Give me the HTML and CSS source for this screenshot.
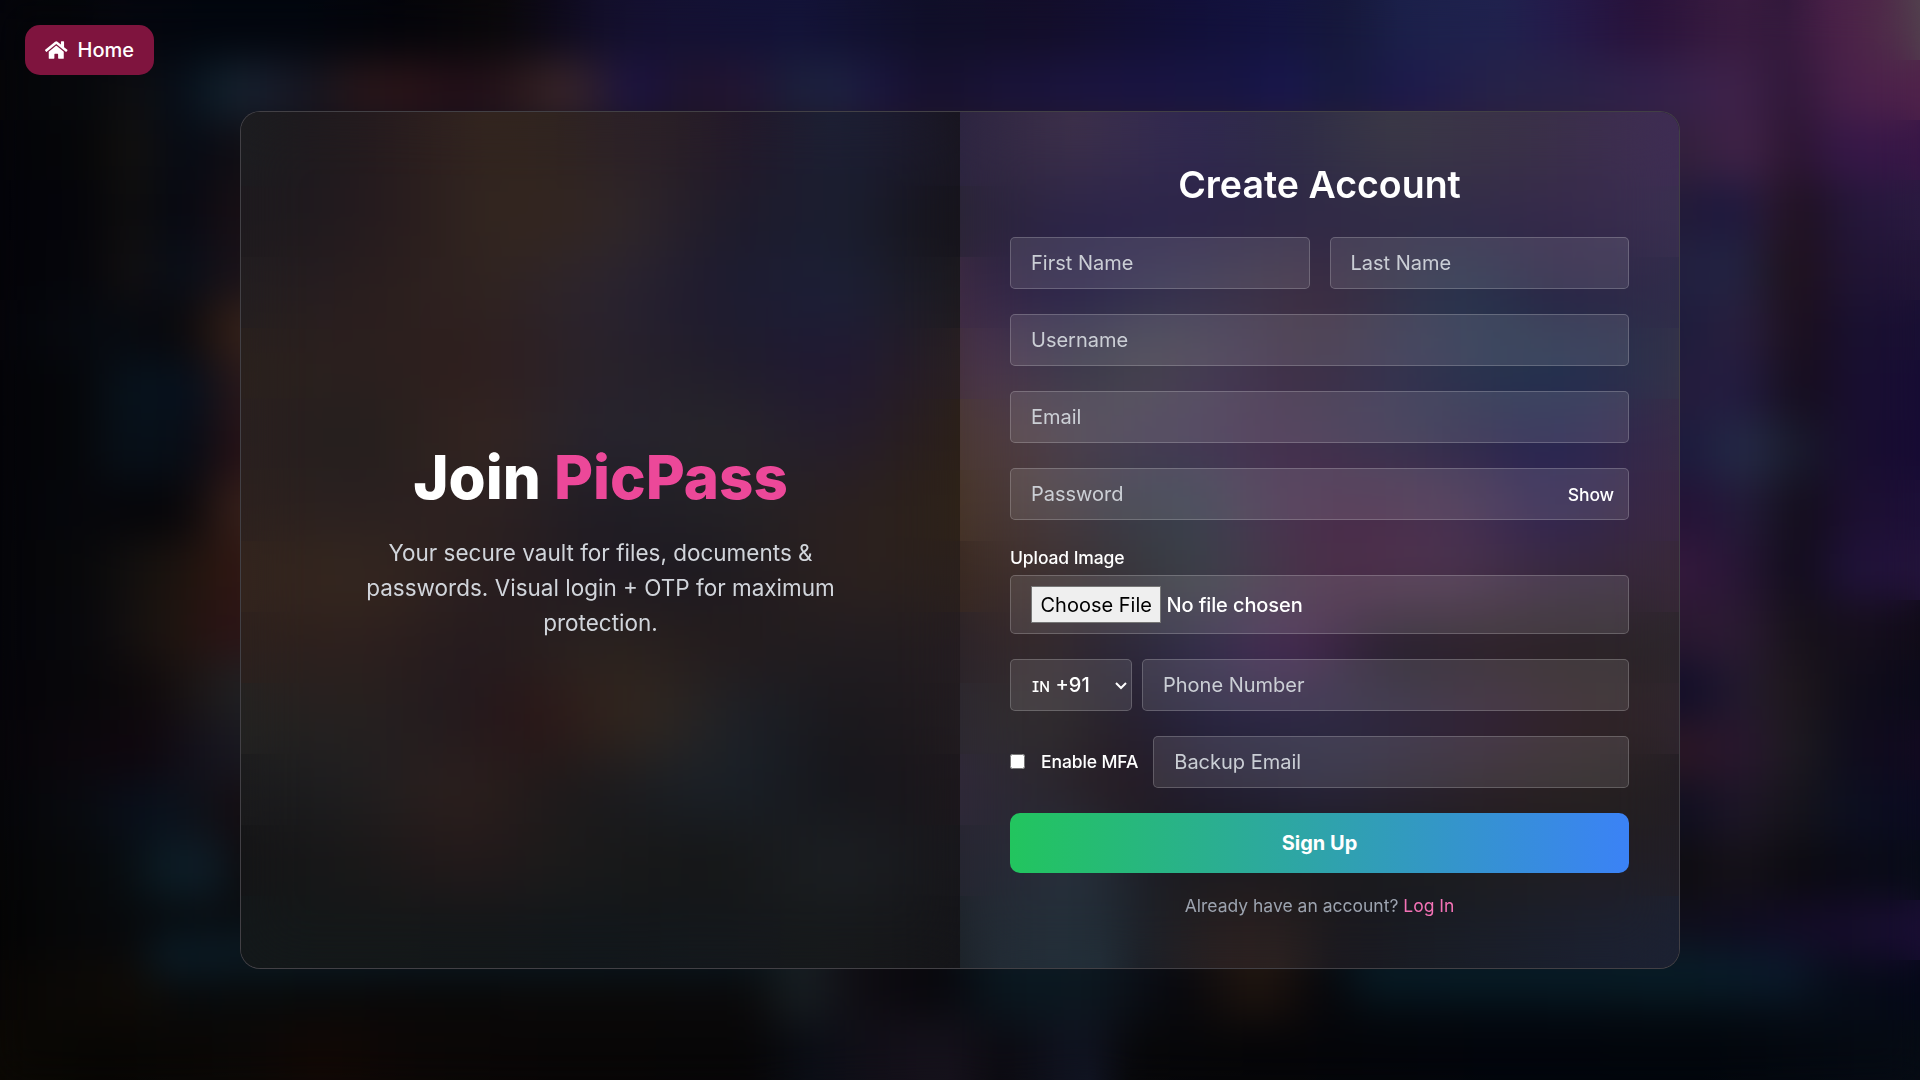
FILE: index.html
```html
<!DOCTYPE html>
<html lang="en">
<head>
  <meta charset="utf-8">
  <title>PicPass - Create Account</title>
  <link rel="stylesheet" href="styles.css">
</head>
<body>
  <div class="backdrop"></div>
  <a class="home" href="#">
    <svg class="home-icon" viewBox="0 0 576 512" fill="currentColor"><path d="M280.37 148.26L96 300.11V464a16 16 0 0 0 16 16l112.06-.29a16 16 0 0 0 15.92-16V368a16 16 0 0 1 16-16h64a16 16 0 0 1 16 16v95.64a16 16 0 0 0 16 16.05L464 480a16 16 0 0 0 16-16V300L295.67 148.26a12.19 12.19 0 0 0-15.3 0zM571.6 251.47L488 182.56V44.05a12 12 0 0 0-12-12h-56a12 12 0 0 0-12 12v72.61L318.47 43a48 48 0 0 0-61 0L4.34 251.47a12 12 0 0 0-1.6 16.9l25.5 31A12 12 0 0 0 45.15 301l235.22-193.74a12.19 12.19 0 0 1 15.3 0L530.9 301a12 12 0 0 0 16.9-1.6l25.5-31a12 12 0 0 0-1.7-16.93z"/></svg>
    <span>Home</span>
  </a>
  <main class="card">
    <section class="panel intro">
      <h1 class="title">Join <span class="brand">PicPass</span></h1>
      <p class="lead">Your secure vault for files, documents &amp; passwords. Visual login + OTP for maximum protection.</p>
    </section>
    <section class="panel signup">
      <h2 class="heading">Create Account</h2>
      <form class="form">
        <div class="row names">
          <input class="field" type="text" placeholder="First Name">
          <input class="field" type="text" placeholder="Last Name">
        </div>
        <input class="field" type="text" placeholder="Username">
        <input class="field" type="email" placeholder="Email">
        <div class="password">
          <input class="field" type="password" placeholder="Password">
          <button class="show" type="button">Show</button>
        </div>
        <div class="upload">
          <label class="label" for="image">Upload Image</label>
          <input class="field file" id="image" type="file">
        </div>
        <div class="row phone">
          <select class="field code"><option>ɪɴ +91</option></select>
          <input class="field" type="tel" placeholder="Phone Number">
        </div>
        <div class="row mfa">
          <input class="check" id="mfa" type="checkbox">
          <label class="label" for="mfa">Enable MFA</label>
          <input class="field" type="email" placeholder="Backup Email">
        </div>
        <button class="submit" type="button">Sign Up</button>
      </form>
      <p class="login">Already have an account? <a class="link" href="#">Log In</a></p>
    </section>
  </main>
</body>
</html>
```
FILE: styles.css
```css
* {
  box-sizing: border-box;
  margin: 0;
}

body {
  position: relative;
  height: 1080px;
  display: flex;
  align-items: center;
  justify-content: center;
  overflow: hidden;
  background: #050508;
  color: #fff;
  font-family: Inter, "Liberation Sans", sans-serif;
  font-size: 20px;
}

/* Blurred artwork: horizontal colour strips softened by a backdrop blur */
.backdrop {
  position: absolute;
  inset: 0;
  background:
    linear-gradient(90deg, #04040a 0px, #040508 60px, #05060e 125px, #02060e 200px, #02060e 300px, #04040a 400px, #0a080a 500px, #0e0a1c 560px, #130f2a 600px, #141030 640px, #131338 800px, #100f28 930px, #130e2a 1040px, #12103a 1200px, #141440 1280px, #16183a 1345px, #1b204a 1400px, #20224e 1500px, #241a4a 1560px, #28123a 1640px, #3a1c40 1740px, #30183a 1785px, #4a2048 1830px, #4e2748 1880px, #52424e 1920px) 0 0,
    linear-gradient(90deg, #050508 0px, #06080c 100px, #100f10 130px, #050c18 180px, #10202a 220px, #182030 250px, #151520 310px, #25161a 350px, #2a1418 400px, #200e18 470px, #2a181c 520px, #3a2628 560px, #2a1c30 600px, #1a1244 630px, #1e142e 680px, #221432 740px, #1a1f3c 800px, #1d2340 830px, #1a153e 880px, #16102c 930px, #191338 1000px, #1a1440 1100px, #171544 1250px, #181650 1280px, #171a3c 1340px, #1c194c 1400px, #262248 1500px, #282246 1560px, #30204a 1640px, #40224a 1740px, #2c1636 1790px, #48204a 1840px, #50224a 1920px) 0 60px,
    linear-gradient(90deg, #040409 0px, #050608 90px, #14110f 130px, #050a14 180px, #100e14 235px, #33203c 1690px, #42234a 1750px, #28142c 1790px, #361848 1840px, #381646 1920px) 0 120px,
    linear-gradient(90deg, #030309 0px, #05050a 90px, #100f0e 130px, #050812 180px, #180f14 235px, #221a38 1690px, #1c1840 1735px, #2c1a34 1770px, #1e101c 1795px, #24163a 1850px, #2a1a40 1920px) 0 180px,
    linear-gradient(90deg, #040308 0px, #05060b 90px, #141010 130px, #060d18 180px, #1a1218 235px, #222040 1690px, #232443 1740px, #1e1018 1790px, #201434 1850px, #221538 1920px) 0 240px,
    linear-gradient(90deg, #050409 0px, #060a10 90px, #080a10 130px, #07080d 180px, #281812 220px, #36231c 240px, #1e1c3c 1690px, #2a2040 1740px, #1a0e1a 1800px, #191030 1850px, #190f33 1920px) 0 300px,
    linear-gradient(90deg, #040408 0px, #050609 85px, #081018 110px, #06131e 150px, #070e1a 200px, #2a181a 235px, #241c3c 1690px, #231c42 1740px, #150d1a 1800px, #190f30 1850px, #170c34 1920px) 0 360px,
    linear-gradient(90deg, #040408 0px, #050609 85px, #081018 110px, #070f18 160px, #080b14 200px, #281216 235px, #1c1a3c 1690px, #252c48 1745px, #171828 1800px, #180e2e 1850px, #170b34 1920px) 0 420px,
    linear-gradient(90deg, #040408 0px, #06070c 90px, #050509 150px, #0a080b 190px, #38201a 235px, #241236 1690px, #231c3a 1745px, #120d18 1800px, #1c0f30 1850px, #1d0f38 1920px) 0 480px,
    linear-gradient(90deg, #040408 0px, #08080a 90px, #12100f 130px, #1c130e 180px, #301712 235px, #33183c 1690px, #271636 1740px, #100c18 1800px, #20123a 1850px, #23133a 1920px) 0 540px,
    linear-gradient(90deg, #040409 0px, #08080c 90px, #141010 130px, #20150f 180px, #2c1416 235px, #2a1830 1690px, #2c1b34 1740px, #151118 1800px, #170f1e 1850px, #100b18 1920px) 0 600px,
    linear-gradient(90deg, #050409 0px, #08070a 90px, #0f0a0c 150px, #1a1414 190px, #202022 235px, #120e28 1690px, #241a30 1740px, #1f181c 1790px, #100d1a 1850px, #0c0a1a 1920px) 0 660px,
    linear-gradient(90deg, #060509 0px, #0c070d 90px, #0f070e 150px, #12101a 190px, #191820 235px, #2a1624 1690px, #28162f 1740px, #1c1a1e 1800px, #0e0c1c 1850px, #120a20 1920px) 0 720px,
    linear-gradient(90deg, #050508 0px, #090b10 90px, #080e1a 130px, #0b131c 180px, #140d12 235px, #100f20 1690px, #1e1628 1740px, #16141a 1790px, #0c0f20 1850px, #0b0a20 1920px) 0 780px,
    linear-gradient(90deg, #050506 0px, #07090b 90px, #080e12 135px, #0b1c25 158px, #0e1d28 212px, #0c0b0d 240px, #0e0c10 1690px, #16121a 1740px, #0c0b10 1790px, #0a0a16 1850px, #080c18 1920px) 0 840px,
    linear-gradient(90deg, #040404 0px, #07080a 90px, #07090c 150px, #080c10 240px, #0a1014 700px, #18242a 800px, #100e14 850px, #08070c 940px, #0c1c26 1000px, #0e1c26 1080px, #0c1018 1160px, #2a1c14 1260px, #07101a 1340px, #0a141e 1500px, #0f0e1c 1690px, #0f0c20 1740px, #140c28 1830px, #1a0e34 1920px) 0 900px,
    linear-gradient(90deg, #080605 0px, #0c0906 90px, #0f0b07 140px, #070a0c 190px, #080a0b 260px, #090808 400px, #0a0909 600px, #0a090a 750px, #182024 800px, #100e14 850px, #08070c 940px, #0a161e 1000px, #0c1820 1080px, #0c1018 1130px, #07070c 1180px, #20150f 1260px, #07060a 1320px, #050c12 1380px, #050d14 1500px, #060f16 1690px, #070f1a 1800px, #060c18 1850px, #050818 1920px) 0 960px,
    linear-gradient(90deg, #0b0804 0px, #070604 100px, #0b0806 250px, #110805 320px, #0b0706 420px, #080606 560px, #070607 750px, #0b0e16 810px, #120f18 880px, #16121c 950px, #0b0a10 1000px, #111524 1090px, #070709 1130px, #050508 1280px, #02050c 1500px, #02060c 1700px, #060b14 1920px) 0 1020px;
  background-size: 100% 60px;
  background-repeat: no-repeat;
}

/* Neon bars along the floor of the artwork */
.backdrop::before {
  content: "";
  position: absolute;
  top: 936px;
  left: 0;
  width: 100%;
  height: 60px;
  background:
    linear-gradient(90deg, transparent 140px, #0a1e2a 160px, #0b1b25 240px, #0a161e 760px, transparent 790px) 0 0 / 100% 38px no-repeat,
    linear-gradient(90deg, transparent 1335px, #071c26 1370px, #071e29 1690px, #0a1a2c 1790px, transparent 1825px) 0 16px / 100% 42px no-repeat;
}

.backdrop::after {
  content: "";
  position: absolute;
  inset: 0;
  backdrop-filter: blur(20px);
}

.home {
  position: absolute;
  top: 25px;
  left: 25px;
  height: 50px;
  padding: 0 20px;
  display: flex;
  align-items: center;
  gap: 10px;
  border-radius: 15px;
  background: #7f143e;
  color: #fff;
  font-weight: 500;
  text-decoration: none;
}

.home-icon {
  width: 22.5px;
  height: 20px;
}

.card {
  position: relative;
  width: 1440px;
  height: 858px;
  display: grid;
  grid-template-columns: 1fr 1fr;
  overflow: hidden;
  border: 1px solid rgba(255, 255, 255, 0.17);
  border-radius: 20px;
  background: #1c1a20;
}

.panel {
  position: relative;
  padding: 50px;
  background-size: 100% 74px;
  background-repeat: no-repeat;
}

.panel::before {
  content: "";
  position: absolute;
  inset: 0;
  backdrop-filter: blur(32px);
}

.panel > * {
  position: relative;
}

.intro {
  display: flex;
  flex-direction: column;
  align-items: center;
  justify-content: center;
  gap: 20px;
  text-align: center;
  background-image:
    linear-gradient(90deg, #1c1d20 0px, #1d1a1e 60px, #271b1e 150px, #33251f 240px, #30241f 310px, #2c2128 380px, #2a2026 430px, #22182a 500px, #1c2034 590px, #1c1a2e 660px, #18151e 720px),
    linear-gradient(90deg, #1e1a1e 0px, #1e191e 60px, #271b1e 150px, #34271f 260px, #32261f 330px, #30272a 390px, #1e1a2a 480px, #1a1e30 600px, #16141c 680px, #15131a 720px),
    linear-gradient(90deg, #221e20, #291d1e, #30231f, #2b2430, #1d1a30, #1c2038, #1c191c),
    linear-gradient(90deg, #2a211d, #2b1f1e, #2e1e1e, #29222a, #201c2a, #201834, #2a2020),
    linear-gradient(90deg, #2a201f, #231e1e, #35251f, #262330, #28262a, #241c2e, #2c2016),
    linear-gradient(90deg, #2c211e, #291f1f, #2e2221, #1f1c24, #232126, #2a2020, #2e2217),
    linear-gradient(90deg, #33241d, #36281f, #2a1e1f, #201a22, #1d1a20, #2c211f, #2a201c),
    linear-gradient(90deg, #2c201d, #2d1f1d, #241a1e, #2c241f, #241b1c, #201c20, #241c20),
    linear-gradient(90deg, #232322, #26211f, #221a1e 30%, #2a1416 40%, #35291f, #1b2028, #1a171b, #221c20),
    linear-gradient(90deg, #1a1a1c, #1e1e20, #2e201d 220px, #1b181a 330px, #1a2129 480px, #15151a, #1d171c),
    linear-gradient(90deg, #141416, #181717, #24191a 220px, #1a1a1a, #151515, #1c2024, #17161a),
    linear-gradient(90deg, #13181a, #141819, #131719, #12171b, #14181c, #17191b, #141418);
  background-position: 0 0, 0 71px, 0 142px, 0 213px, 0 284px, 0 355px, 0 426px, 0 497px, 0 568px, 0 639px, 0 710px, 0 782px;
}

.title {
  font-size: 60px;
  font-weight: 800;
  line-height: 75px;
}

.brand {
  color: #ec4899;
}

.lead {
  max-width: 480px;
  color: #d1d5db;
  font-size: 22.5px;
  line-height: 35px;
}

.signup {
  background-image:
    linear-gradient(90deg, #2c2440, #3d304a, #302850, #2f2c46 340px, #3a3846 430px, #3a3048, #3f2c54),
    linear-gradient(90deg, #2a2434, #2a2348, #2c2448, #2f2845, #302b48, #35284a, #3a3050),
    linear-gradient(90deg, #3f2b42 0px, #2c234a 80px, #333050 190px, #3c3448 290px, #3e2c40 360px, #28364e 500px, #2a2444 600px, #302c4a 720px),
    linear-gradient(90deg, #43303c 0px, #4b3550 40px, #383a4a 120px, #48464c 190px, #443a55 260px, #3e3044 340px, #353350 440px, #24364e 560px, #24304e 640px, #363448 720px),
    linear-gradient(90deg, #4a3830 0px, #503c44 60px, #4a4250 120px, #453856 220px, #432f4c 340px, #383650 420px, #2c284a 520px, #262652 600px, #35284a 680px, #392c46 720px),
    linear-gradient(90deg, #473426 0px, #4a3a3c 70px, #3a3a48 160px, #36424e 230px, #4a3654 300px, #482a48 390px, #4a3250 480px, #2e2454 600px, #3a2844 680px, #3a2844 720px),
    linear-gradient(90deg, #38281f 0px, #40302e 70px, #383438 160px, #3c4248 240px, #4c2e48 370px, #4e3450 480px, #38283e 600px, #382838 720px),
    linear-gradient(90deg, #2a2228 0px, #36292c 80px, #2a2434 140px, #332f4c 240px, #4a2c56 320px, #3e2446 370px, #25202c 420px, #2c2226 540px, #282224 640px, #2c262c 720px),
    linear-gradient(90deg, #2c2830 0px, #33302f 90px, #251e2a 160px, #272440 240px, #2e2b44 380px, #35243a 520px, #322426 640px, #302630 720px),
    linear-gradient(90deg, #30293a 0px, #2a2730 80px, #261a20 160px, #211d30 240px, #28243a 360px, #2a2024 540px, #25201f 640px, #221d24 720px),
    linear-gradient(90deg, #262530 0px, #272a36 60px, #283340 130px, #1a1b22 180px, #1a181c 290px, #1a1a1c 440px, #201d20 590px, #221e26 720px),
    linear-gradient(90deg, #1c2228 0px, #232c36 40px, #23303a 140px, #1a1e26 180px, #2a2020 260px, #2c2220 320px, #1a181e 370px, #191d26 480px, #1b2030 640px, #1c2132 720px);
  background-position: 0 0, 0 71px, 0 142px, 0 213px, 0 284px, 0 355px, 0 426px, 0 497px, 0 568px, 0 639px, 0 710px, 0 782px;
}

.heading {
  margin-bottom: 30px;
  font-size: 37.5px;
  font-weight: 600;
  line-height: 45px;
  text-align: center;
}

.form {
  display: flex;
  flex-direction: column;
  gap: 25px;
}

.row {
  display: flex;
  align-items: center;
}

.names {
  gap: 20px;
}

.phone {
  gap: 10px;
}

.field {
  display: block;
  flex: 1;
  min-width: 0;
  width: 100%;
  height: 52px;
  min-height: 52px;
  padding: 0 20px;
  border: 1px solid rgba(255, 255, 255, 0.2);
  border-radius: 5px;
  background: rgba(255, 255, 255, 0.1);
  color: #fff;
  font: 500 20px Inter, "Liberation Sans", sans-serif;
}

.field::placeholder {
  color: #d1d5db;
  opacity: 0.96;
  font-weight: 400;
}

.password {
  position: relative;
}

.show {
  position: absolute;
  right: 15px;
  top: 14px;
  padding: 0;
  border: 0;
  background: none;
  color: #fff;
  font: 500 17.5px/25px Inter, "Liberation Sans", sans-serif;
  letter-spacing: -0.1px;
}

.label {
  font-size: 17.5px;
  font-weight: 500;
  line-height: 25px;
  letter-spacing: -0.1px;
}

.upload {
  display: flex;
  flex-direction: column;
  gap: 5px;
}

.file {
  flex: none;
  height: 59px;
  padding-top: 10px;
  letter-spacing: -0.1px;
}

.file::file-selector-button {
  height: 37px;
  margin: 0 5px 0 0;
  padding: 1px 8.5px;
  border: 1px solid #767676;
  border-radius: 0;
  background: #efefef;
  color: #000;
  font: 400 20px Inter, "Liberation Sans", sans-serif;
  letter-spacing: 0;
}

/* Zoomed so the native arrow grows with the text */
.code {
  zoom: 1.25;
  flex: none;
  width: 97.6px;
  height: 41.6px;
  min-height: 0;
  padding: 0 12.8px;
  border-radius: 4px;
  font-size: 16px;
}

.code option {
  background: #222;
}

.check {
  width: 15px;
  height: 15px;
  margin: 0 16px 2px 0;
}

.mfa .label {
  margin: 0 15px 2px 0;
  white-space: nowrap;
}

.submit {
  height: 60px;
  border: 0;
  border-radius: 10px;
  background: linear-gradient(90deg, #22c55e, #3b82f6);
  color: #fff;
  font: 700 20px Inter, "Liberation Sans", sans-serif;
}

.login {
  margin-top: 20px;
  color: #9ca3af;
  font-size: 17.5px;
  line-height: 25px;
  text-align: center;
}

.link {
  color: #f472b6;
  text-decoration: none;
}
```
